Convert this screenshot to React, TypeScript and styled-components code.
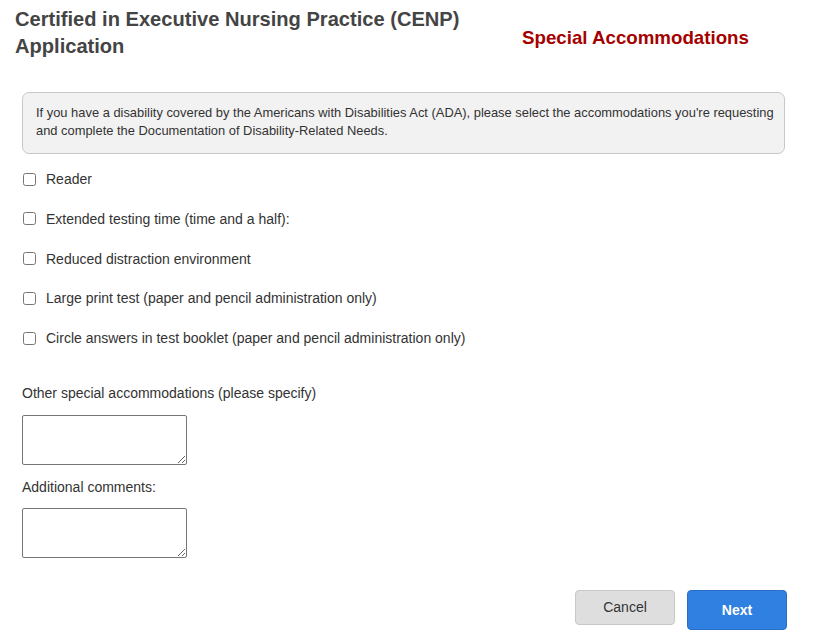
import React from "react";
import styled, { createGlobalStyle } from "styled-components";

const Global = createGlobalStyle`
  html, body { margin: 0; padding: 0; background: #fff; }
  body { font-family: "Liberation Sans", Arial, sans-serif; color: #333; }
  * { box-sizing: border-box; }
`;

const Page = styled.div`
  width: 815px;
  padding: 6px 0 0 0;
`;

const Header = styled.header`
  display: flex;
  align-items: flex-start;
  padding-left: 15px;
`;

const Title = styled.h1`
  flex: 0 0 507px;
  margin: 0;
  font-size: 20.1px;
  line-height: 27px;
  font-weight: bold;
  color: #444;
`;

const Section = styled.h2`
  margin: 21px 0 0 0;
  font-size: 18.72px;
  line-height: 22px;
  font-weight: bold;
  color: #a50000;
`;

const Body = styled.main`
  padding: 0 28px 0 22px;
  display: flex;
  flex-direction: column;
`;

const Notice = styled.div`
  margin-top: 32px;
  width: 763px;
  background: #f2f2f2;
  border: 1px solid #c8c8c8;
  border-radius: 7px;
  padding: 11px 8px 13px 13px;
  font-size: 12.9px;
  line-height: 18px;
  color: #333;
`;

const Options = styled.div`
  margin-top: 15px;
  display: flex;
  flex-direction: column;
  gap: 19.75px;
`;

const Option = styled.label`
  display: flex;
  align-items: center;
  gap: 10px;
  height: 20px;
  padding-left: 1px;
  font-size: 14px;
  color: #333;
`;

const Check = styled.input`
  margin: 0;
  width: 13px;
  height: 13px;
`;

const FieldLabel = styled.label<{ $top: number }>`
  display: block;
  margin-top: ${(p) => p.$top}px;
  font-size: 14px;
  line-height: 20px;
  color: #333;
`;

const Area = styled.textarea<{ $top: number }>`
  display: block;
  margin-top: ${(p) => p.$top}px;
  width: 165px;
  height: 50px;
  border: 1px solid #767676;
  border-radius: 2px;
  resize: both;
`;

const Actions = styled.div`
  margin-top: 32px;
  display: flex;
  justify-content: flex-end;
  align-items: flex-start;
  gap: 12px;
  width: 765px;
`;

const Button = styled.button<{ $primary?: boolean }>`
  width: 100px;
  height: ${(p) => (p.$primary ? 40 : 35)}px;
  padding: 0 0 ${(p) => (p.$primary ? 1 : 2)}px;
  border-radius: 4px;
  font-family: "Liberation Sans", Arial, sans-serif;
  font-size: 14px;
  font-weight: ${(p) => (p.$primary ? "bold" : "normal")};
  color: ${(p) => (p.$primary ? "#fff" : "#333")};
  background: ${(p) => (p.$primary ? "#2f80e0" : "#dedede")};
  border: 1px solid ${(p) => (p.$primary ? "#2a6fc4" : "#c8c8c8")};
  cursor: pointer;
`;

const options = [
  "Reader",
  "Extended testing time (time and a half):",
  "Reduced distraction environment",
  "Large print test (paper and pencil administration only)",
  "Circle answers in test booklet (paper and pencil administration only)",
];

export default function App() {
  return (
    <>
      <Global />
      <Page>
        <Header>
          <Title>
            Certified in Executive Nursing Practice (CENP)
            <br />
            Application
          </Title>
          <Section>Special Accommodations</Section>
        </Header>
        <Body>
          <Notice>
            If you have a disability covered by the Americans with Disabilities Act (ADA), please select the
            accommodations you're requesting and complete the Documentation of Disability-Related Needs.
          </Notice>
          <Options>
            {options.map((o) => (
              <Option key={o}>
                <Check type="checkbox" />
                {o}
              </Option>
            ))}
          </Options>
          <FieldLabel $top={35}>Other special accommodations (please specify)</FieldLabel>
          <Area $top={12} />
          <FieldLabel $top={12}>Additional comments:</FieldLabel>
          <Area $top={11} />
          <Actions>
            <Button type="button">Cancel</Button>
            <Button type="button" $primary>
              Next
            </Button>
          </Actions>
        </Body>
      </Page>
    </>
  );
}
